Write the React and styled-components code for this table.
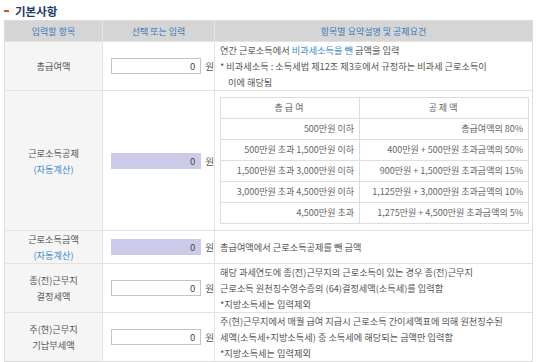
import React from "react";
import styled, { createGlobalStyle } from "styled-components";

const Global = createGlobalStyle`
  html, body { margin: 0; padding: 0; background: #fff; }
  body { font-family: "Noto Sans CJK KR", "Noto Sans", sans-serif; color: #555; }
`;

const Page = styled.div`
  width: 540px;
  padding: 4px 0 0 4px;
  box-sizing: border-box;
`;

const Title = styled.h2`
  margin: 0 0 2px;
  height: 14px;
  display: flex;
  align-items: center;
  gap: 6px;
  font-size: 11.5px;
  font-weight: bold;
  color: #1d3d6d;
  line-height: 14px;
`;

const Dash = styled.span`
  display: inline-block;
  width: 5px;
  height: 2px;
  background: #e0501c;
`;

const Table = styled.table`
  width: 529px;
  border-collapse: collapse;
  table-layout: fixed;
  border: 1px solid #dcdcdc;
  font-size: 9.2px;
`;

const Th = styled.th`
  height: 20px;
  padding: 0;
  background: #d5d5d5;
  color: #3d79b5;
  font-weight: normal;
  font-size: 9px;
  text-align: center;
  border-left: 1px solid #e4e4e4;
  &:first-child { border-left: none; }
`;

const Row = styled.tr`
  height: ${(p) => p.$h}px;
  border-top: 1px solid #e2e2e2;
`;

const Label = styled.td`
  padding: 0;
  background: #f5f5f5;
  text-align: center;
  line-height: 16px;
  color: #555;
  border-right: 1px solid #e2e2e2;
`;

const Auto = styled.span`
  color: #3d8ac8;
`;

const InputCell = styled.td`
  padding: 0 0 0 8px;
  border-right: 1px solid #e2e2e2;
`;

const InputWrap = styled.div`
  display: flex;
  align-items: center;
  gap: 4px;
`;

const Amount = styled.div`
  width: 93px;
  height: 16px;
  box-sizing: border-box;
  border: 1px solid ${(p) => (p.$auto ? "#cbcbe9" : "#c4c4c4")};
  background: ${(p) => (p.$auto ? "#cbcbe9" : "#fff")};
  text-align: right;
  padding-right: 5px;
  line-height: 14px;
  font-size: 9.5px;
  color: #444;
`;

const Won = styled.span`
  font-size: 9.5px;
  color: #555;
`;

const Desc = styled.td`
  padding: 0 5px;
  line-height: 16px;
  color: #555;
  white-space: nowrap;
  vertical-align: middle;
`;

const Blue = styled.span`
  color: #3d8ac8;
`;

const Indent = styled.span`
  padding-left: 8px;
`;

const Inner = styled.table`
  width: 309px;
  border-collapse: collapse;
  table-layout: fixed;
  margin: 0;
  font-size: 9px;
`;

const ITh = styled.th`
  height: 20px;
  padding: 0;
  border: 1px solid #dddddd;
  font-weight: normal;
  color: #666;
  text-align: center;
  letter-spacing: 2px;
`;

const ITd = styled.td`
  height: 20px;
  padding: 0 5px 0 0;
  border: 1px solid #dddddd;
  text-align: right;
  color: #666;
  white-space: nowrap;
`;

const brackets = [
  ["500만원 이하", "총급여액의 80%"],
  ["500만원 초과 1,500만원 이하", "400만원 + 500만원 초과금액의 50%"],
  ["1,500만원 초과 3,000만원 이하", "900만원 + 1,500만원 초과금액의 15%"],
  ["3,000만원 초과 4,500만원 이하", "1,125만원 + 3,000만원 초과금액의 10%"],
  ["4,500만원 초과", "1,275만원 + 4,500만원 초과금액의 5%"],
];

function AmountInput({ auto }) {
  return (
    <InputWrap>
      <Amount $auto={auto}>0</Amount>
      <Won>원</Won>
    </InputWrap>
  );
}

export default function App() {
  return (
    <Page>
      <Global />
      <Title>
        <Dash />
        기본사항
      </Title>
      <Table>
        <colgroup>
          <col style={{ width: 98 }} />
          <col style={{ width: 112 }} />
          <col />
        </colgroup>
        <thead>
          <tr>
            <Th>입력할 항목</Th>
            <Th>선택 또는 입력</Th>
            <Th>항목별 요약설명 및 공제요건</Th>
          </tr>
        </thead>
        <tbody>
          <Row $h={49}>
            <Label>총급여액</Label>
            <InputCell>
              <AmountInput />
            </InputCell>
            <Desc>
              연간 근로소득에서 <Blue>비과세소득을 뺀</Blue> 금액을 입력
              <br />* 비과세소득 : 소득세법 제12조 제3호에서 규정하는 비과세 근로소득이
              <br />
              <Indent>이에 해당됨</Indent>
            </Desc>
          </Row>
          <Row $h={140}>
            <Label>
              근로소득공제
              <br />
              <Auto>(자동계산)</Auto>
            </Label>
            <InputCell>
              <AmountInput auto />
            </InputCell>
            <Desc>
              <Inner>
                <colgroup>
                  <col style={{ width: 139 }} />
                  <col />
                </colgroup>
                <thead>
                  <tr>
                    <ITh>총급여</ITh>
                    <ITh>공제액</ITh>
                  </tr>
                </thead>
                <tbody>
                  {brackets.map(([a, b]) => (
                    <tr key={a}>
                      <ITd>{a}</ITd>
                      <ITd>{b}</ITd>
                    </tr>
                  ))}
                </tbody>
              </Inner>
            </Desc>
          </Row>
          <Row $h={32}>
            <Label>
              근로소득금액
              <br />
              <Auto>(자동계산)</Auto>
            </Label>
            <InputCell>
              <AmountInput auto />
            </InputCell>
            <Desc>총급여액에서 근로소득공제를 뺀 금액</Desc>
          </Row>
          <Row $h={47}>
            <Label>
              종(전)근무지
              <br />
              결정세액
            </Label>
            <InputCell>
              <AmountInput />
            </InputCell>
            <Desc>
              해당 과세연도에 종(전)근무지의 근로소득이 있는 경우 종(전)근무지
              <br />
              근로소득 원천징수영수증의 (64)결정세액(소득세)를 입력함
              <br />
              *지방소득세는 입력제외
            </Desc>
          </Row>
          <Row $h={48}>
            <Label>
              주(현)근무지
              <br />
              기납부세액
            </Label>
            <InputCell>
              <AmountInput />
            </InputCell>
            <Desc>
              주(현)근무지에서 매월 급여 지급시 근로소득 간이세액표에 의해 원천징수된
              <br />
              세액(소득세+지방소득세) 중 소득세에 해당되는 금액만 입력함
              <br />
              *지방소득세는 입력제외
            </Desc>
          </Row>
        </tbody>
      </Table>
    </Page>
  );
}
